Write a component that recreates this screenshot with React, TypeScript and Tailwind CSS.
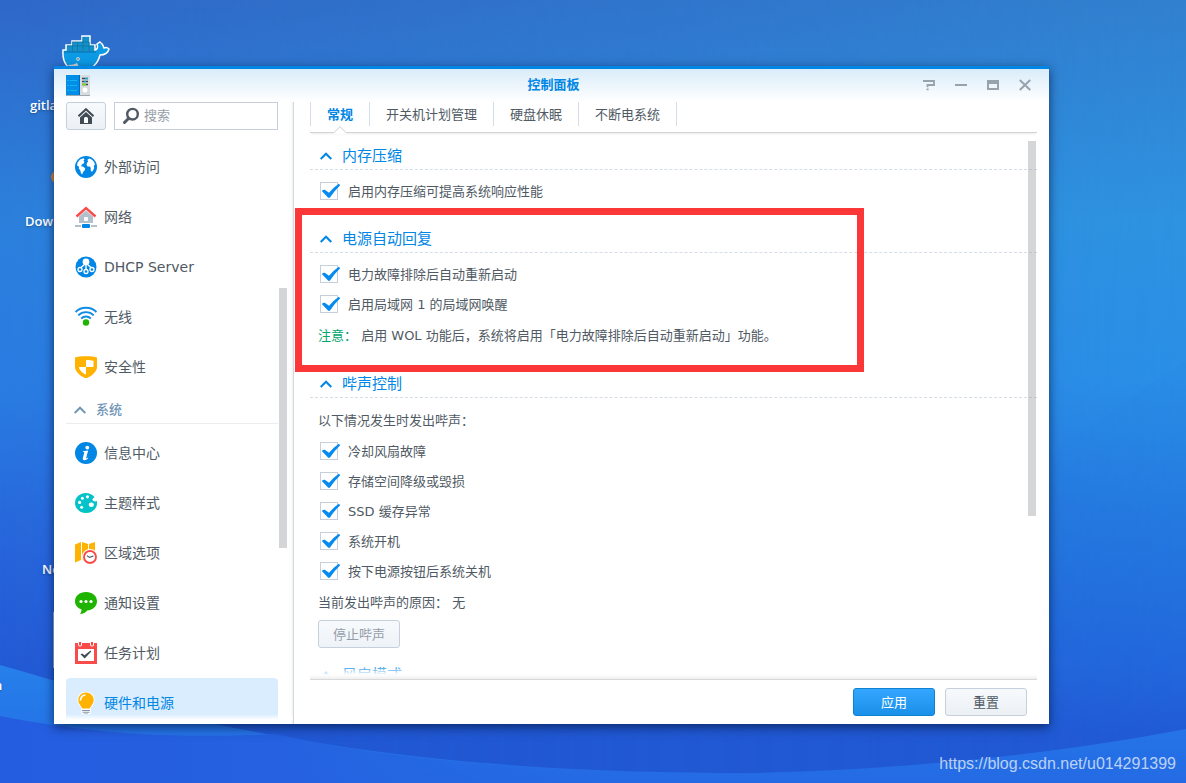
import React, { useState } from "react";

type IconProps = { children: React.ReactNode };

const Icon = ({ children }: IconProps) => (
  <svg viewBox="0 0 22 22" className="size-[22px] shrink-0" aria-hidden="true">
    {children}
  </svg>
);

const GlobeIcon = () => (
  <Icon>
    <circle cx="11" cy="11" r="11" fill="#0086e5" />
    <path
      d="M2.6 6.6 5 3.6 8.4 2.2l1.2 1L8.4 4.6l1 1.2L8.6 7.6 6.8 8.4l-.6 1.8 2.2.6 1.8 1.6-.6 2-1.6 1.6-.6 2.2-1.4-.6-.6-3.2-1.6-1.8.2-1.8L2 9.400z"
      fill="#fff"
    />
    <path
      d="M12.600 3.400l2-.8 2.800 1.400 1.800 2.200.8 2.600-1.200 1 .4 2.200-1.400 3-1.400.8-.8-1.800.2-2-1-1.400-2.200-.2-1-1.600.4-2 1.400-1.200-.8-.8z"
      fill="#fff"
    />
  </Icon>
);

const NetworkIcon = () => (
  <Icon>
    <path d="M4 10.500 11 4.500l7 6V17H4z" fill="#b3bfca" />
    <path d="M1.500 10.500 11 2l9.500 8.500" fill="none" stroke="#fa4b4b" strokeWidth="2.400" />
    <rect x="9" y="11" width="4" height="4" rx="1" fill="#fff" />
    <path d="M0 20h22" stroke="#b3bfca" strokeWidth="2" />
    <rect x="6" y="17" width="10" height="5" fill="#fff" />
    <rect x="7" y="18" width="8" height="4" rx="1" fill="#0086e5" />
  </Icon>
);

const DhcpIcon = () => (
  <Icon>
    <circle cx="11" cy="11" r="10.500" fill="#0086e5" />
    <circle cx="11" cy="5.800" r="3.400" fill="#fff" />
    <path d="M11 8v6M10 8l-4.500 4M12 8l4.500 4" stroke="#fff" strokeWidth="1.400" />
    <g fill="#0086e5" stroke="#fff" strokeWidth="1.300">
      <circle cx="5" cy="13.500" r="2" />
      <circle cx="11" cy="15.500" r="2" />
      <circle cx="17" cy="13.500" r="2" />
    </g>
  </Icon>
);

const WifiIcon = () => (
  <Icon>
    <g fill="none" stroke="#0f8ce6" strokeWidth="1.900">
      <path d="M.5 6C6 .4 16 .4 21.500 6" />
      <path d="M3.300 9.300c4.200-4.200 11.200-4.200 15.400 0" />
      <path d="M6.200 12.500c2.700-2.700 6.900-2.700 9.600 0" />
    </g>
    <circle cx="11" cy="16.500" r="3.200" fill="#1fb400" />
  </Icon>
);

const ShieldIcon = () => (
  <Icon>
    <path d="M0 1.500C4 -.3 18 -.3 22 1.500V11c0 5-5.500 9-11 11.500C5.500 20 0 16 0 11z" fill="#ffb200" />
    <path d="M11 4c3 0 5.500.2 7.500.7V11H11z" fill="#fff" />
    <path d="M4 11h7v7.500C7.500 17 4.300 14.500 4 11z" fill="#fff" />
  </Icon>
);

const InfoIcon = () => (
  <Icon>
    <circle cx="11" cy="11" r="11" fill="#0086e5" />
    <circle cx="12.300" cy="5.600" r="1.900" fill="#fff" />
    <path
      d="M8 9.200l5.200-.7-2 7.300c-.2.900.5.900 1.600-.2l.5.500c-1.300 1.700-2.600 2.300-3.900 2.200-1.500-.1-1.900-1-1.500-2.500l1.400-5.200c.1-.6-.3-.7-1.400-.7z"
      fill="#fff"
    />
  </Icon>
);

const PaletteIcon = () => (
  <Icon>
    <path
      d="M11 1C5 1 0 5.300 0 11s5 10 11 10c5.500 0 10.500-3.500 11-9V9c-1 .5-3 .6-4-.3-1-1-.4-2.300 1-2.900.6-.3.500-.9 0-1.300C17 2.200 14 1 11 1z"
      fill="#04c3c8"
    />
    <g fill="#fff">
      <circle cx="12.500" cy="4.800" r="1.600" />
      <circle cx="7.400" cy="6.200" r="1.500" />
      <circle cx="4.600" cy="10.400" r="1.600" />
      <circle cx="6.600" cy="15.200" r="1.500" />
      <ellipse cx="16.300" cy="12.700" rx="2.600" ry="2.200" />
    </g>
  </Icon>
);

const RegionIcon = () => (
  <Icon>
    <path d="M0 2.500 6 0v18l-6 2.500zM7 0l6 2v17l-6-1.500zM14 2l6-2v18l-6 1z" fill="#ffb200" />
    <circle cx="15" cy="15" r="8" fill="#fff" />
    <circle cx="15" cy="15" r="6" fill="#fff" stroke="#fa4b4b" strokeWidth="1.900" />
    <path d="M12 13.800l2.700 1.600 3.800-1.400" fill="none" stroke="#505a64" strokeWidth="1.200" />
  </Icon>
);

const ChatIcon = () => (
  <Icon>
    <path
      d="M11 0C4.500 0 0 4 0 9.300c0 4 2.500 6.800 6.500 8.200 0 1.700-.5 3-1.500 4.500 3 0 5.500-1.500 7.200-3.500C18 18 22 14.500 22 9.300 22 4 17.500 0 11 0z"
      fill="#1fb400"
    />
    <g fill="#fff">
      <circle cx="6" cy="9.500" r="1.600" />
      <circle cx="11" cy="9.500" r="1.600" />
      <circle cx="16" cy="9.500" r="1.600" />
    </g>
  </Icon>
);

const TaskIcon = () => (
  <Icon>
    <path d="M0 1h22v21H0z" fill="#fa4b4b" />
    <path d="M3 7h16v12H3z" fill="#fff" />
    <g fill="#fa4b4b" stroke="#fff">
      <rect x="3.500" y="-.5" width="3" height="4.500" rx="1" />
      <rect x="15.500" y="-.5" width="3" height="4.500" rx="1" />
    </g>
    <path d="M5.500 12.300l1.700-.8 2.300 1.800L15.500 8.500l.8 1L9.700 16.500z" fill="#414b55" />
  </Icon>
);

const BulbIcon = () => (
  <Icon>
    <path
      d="M11-.5C6-.5 2.500 3 2.500 8c0 3.500 2 5.500 3.700 8v5.200l2.300 1.300h5l2.300-1.300V16c1.700-2.500 3.700-4.500 3.700-8 0-5-3.500-8.500-8.500-8.500z"
      fill="#fff"
    />
    <path
      d="M11 .5C6.500.5 3.300 3.700 3.300 8c0 3.800 2.700 5.500 3.900 8.500h7.600c1.200-3 3.900-4.700 3.900-8.500C18.700 3.700 15.500.5 11 .5z"
      fill="#ffb200"
    />
    <path d="M5.500 8c.2-2.600 1.700-4.300 4.300-5" fill="none" stroke="#fff" strokeWidth="1.700" strokeLinecap="round" />
    <path d="M7 18.500h8M7.500 20.300h7M9 22h4" stroke="#8795a3" strokeWidth="1.100" />
  </Icon>
);

const Chevron = () => (
  <svg viewBox="0 0 12 8" className="h-2 w-3" fill="none" stroke="currentColor" strokeWidth="2" aria-hidden="true">
    <path d="M.7 7 6 1.700 11.300 7" />
  </svg>
);

const networkItems = [
  { label: "外部访问", icon: <GlobeIcon /> },
  { label: "网络", icon: <NetworkIcon /> },
  { label: "DHCP Server", icon: <DhcpIcon /> },
  { label: "无线", icon: <WifiIcon /> },
  { label: "安全性", icon: <ShieldIcon /> },
];

const systemItems = [
  { label: "信息中心", icon: <InfoIcon /> },
  { label: "主题样式", icon: <PaletteIcon /> },
  { label: "区域选项", icon: <RegionIcon /> },
  { label: "通知设置", icon: <ChatIcon /> },
  { label: "任务计划", icon: <TaskIcon /> },
  { label: "硬件和电源", icon: <BulbIcon /> },
];

const tabs = ["常规", "开关机计划管理", "硬盘休眠", "不断电系统"];

const beepEvents = ["冷却风扇故障", "存储空间降级或毁损", "SSD 缓存异常", "系统开机", "按下电源按钮后系统关机"];

const Wallpaper = () => (
  <svg
    viewBox="0 0 1186 783"
    preserveAspectRatio="none"
    className="absolute inset-0 size-full"
    aria-hidden="true"
  >
    <defs>
      <linearGradient id="skyLeft" x1="0" y1="0" x2="0" y2="1">
        <stop offset="0" stopColor="#2f68c8" />
        <stop offset=".28" stopColor="#2c80dc" />
        <stop offset=".5" stopColor="#2a7be2" />
        <stop offset=".72" stopColor="#2763da" />
        <stop offset=".9" stopColor="#2157d2" />
        <stop offset="1" stopColor="#2157d2" />
      </linearGradient>
      <linearGradient id="skyRight" x1="0" y1="0" x2="0" y2="1">
        <stop offset="0" stopColor="#3180cf" />
        <stop offset=".28" stopColor="#2e93e0" />
        <stop offset=".48" stopColor="#2a8fe6" />
        <stop offset=".66" stopColor="#257ae0" />
        <stop offset=".84" stopColor="#2268dc" />
        <stop offset=".94" stopColor="#2159d4" />
      </linearGradient>
      <linearGradient id="fade" x1="0" y1="0" x2="1" y2="0">
        <stop offset="0" stopColor="#000" />
        <stop offset="1" stopColor="#fff" />
      </linearGradient>
      <mask id="toRight">
        <rect width="1186" height="783" fill="url(#fade)" />
      </mask>
      <linearGradient id="wave" x1="0" y1="665" x2="0" y2="783" gradientUnits="userSpaceOnUse">
        <stop offset="0" stopColor="#2680ea" />
        <stop offset="1" stopColor="#246ae4" />
      </linearGradient>
      <linearGradient id="waveDark" x1="0" y1="0" x2="1" y2="0">
        <stop offset="0" stopColor="#255de0" />
        <stop offset=".4" stopColor="#2561e0" />
        <stop offset="1" stopColor="#246ae4" stopOpacity="0" />
      </linearGradient>
    </defs>
    <rect width="1186" height="783" fill="url(#skyLeft)" />
    <rect width="1186" height="783" fill="url(#skyRight)" mask="url(#toRight)" />
    <path d="M1186 360 1049 455V783h137z" fill="#1f6fe0" opacity=".06" />
    <path
      d="M0 665C70 685 140 706 215 724 400 762 560 773 750 773 900 770 1050 755 1186 729V783H0z"
      fill="url(#wave)"
    />
    <path d="M0 716C90 734 180 739 275 734 400 762 560 773 700 773V783H0z" fill="url(#waveDark)" />
  </svg>
);

const Whale = () => (
  <svg viewBox="0 0 48 36" className="h-9 w-12" aria-hidden="true">
    <path
      d="M1 15H4V10H10V6H20V1H28V10H33V15C36 14 36 12 35 9L38 7C41 9 41 11 42 13 44 12 46 13 47 14 46 18 42 20 38 20 36 28 30 36 18 36 6 36 0 28 1 15z"
      fill="#0d9be6"
      stroke="#fff"
      strokeWidth="1.500"
    />
    <path d="M5 10.500h27v6H5zM10.500 7h17v3.500h-17zM20.500 2h6.500v5h-6.500z" fill="#1590c8" />
    <path d="M10.500 7v9M15.500 7v9M21 2v14M27 7v9M5 11h27M10 7h17" stroke="#0b719e" strokeWidth=".6" />
    <path d="M2 17h32" stroke="#0d6da1" />
    <circle cx="16" cy="24" r="1.700" fill="#fff" />
    <circle cx="16" cy="24" r=".8" fill="#223" />
    <path d="M6 30c4 0 7-1 9-2l2 4 2 4H10z" fill="#d7dde1" />
  </svg>
);

const PanelIcon = () => (
  <svg viewBox="0 0 24 21" className="h-[21px] w-6" aria-hidden="true">
    <rect width="24" height="20" fill="#d9dcdf" />
    <path d="M0 0h13v20H0z" fill="#008ee6" />
    <path d="M13 0h1v20h-1z" fill="#006bc0" />
    <path d="M1 5.500h2M4 5.500h7M1 10.500h2M4 10.500h7M1 15.500h2M4 15.500h7" stroke="#13b4ee" />
    <path d="M16 3.500h6M16 6.500h6M16 9.500h6" stroke="#3c444c" strokeWidth="1.600" />
    <path d="M19 3.500h3M18 6.500h2" stroke="#13b4ee" strokeWidth="1.600" />
    <path d="M16 9.500h4" stroke="#7bd51c" strokeWidth="1.600" />
    <circle cx="19" cy="15" r="3" fill="#fff" stroke="#c2c8cd" strokeWidth=".5" />
    <path d="M0 20.500h24" stroke="#9fa9b2" />
  </svg>
);

const WindowControls = () => (
  <div className="flex text-[#98a2ad]">
    <button aria-label="帮助" className="flex h-8 w-8 items-center justify-center">
      <svg viewBox="0 0 12 12" className="size-3" fill="none" stroke="currentColor" strokeWidth="1.800">
        <path d="M0 2h11v4H4.500v2.200M3.600 10.300h2" />
      </svg>
    </button>
    <button aria-label="最小化" className="flex h-8 w-8 items-center justify-center">
      <svg viewBox="0 0 12 12" className="size-3" stroke="currentColor" strokeWidth="2">
        <path d="M0 6h12" />
      </svg>
    </button>
    <button aria-label="最大化" className="flex h-8 w-8 items-center justify-center">
      <svg viewBox="0 0 12 12" className="size-3" fill="none" stroke="currentColor">
        <path d="M1 2v8h10V2" strokeWidth="2" />
        <path d="M0 3h12" strokeWidth="4" />
      </svg>
    </button>
    <button aria-label="关闭" className="flex h-8 w-8 items-center justify-center">
      <svg viewBox="0 0 12 12" className="size-3" stroke="currentColor" strokeWidth="2">
        <path d="M.8 1 11.200 11M11.200 1 .8 11" />
      </svg>
    </button>
  </div>
);

interface NavItemProps {
  label: string;
  icon: React.ReactNode;
  active: boolean;
  onClick: () => void;
}

const NavItem = ({ label, icon, active, onClick }: NavItemProps) => (
  <li>
    <button
      onClick={onClick}
      className={`flex h-[50px] w-full items-center gap-[7px] rounded pl-[9px] text-left text-sm ${
        active ? "bg-[#d9edff] text-[#0086e5]" : "text-[#505a64]"
      }`}
    >
      {icon}
      <span>{label}</span>
    </button>
  </li>
);

const CheckRow = ({ label }: { label: string }) => {
  const [checked, setChecked] = useState(true);

  return (
    <label className="flex h-[30px] items-center gap-[10px] pl-[10px]">
      <span className="relative size-[18px]">
        <input
          type="checkbox"
          checked={checked}
          onChange={(e) => setChecked(e.target.checked)}
          className="block size-[18px] appearance-none border border-[#c6d0dc] bg-white"
        />
        {checked && (
          <svg viewBox="0 0 20 18" className="pointer-events-none absolute left-0 top-0 h-[18px] w-5 max-w-none">
            <path d="M1.800 9C3 7.600 4.500 7.400 5.500 8.200L9 10.800Q13.500 5.500 18.800 1.800L20.200 3.200Q14 9 10 15.500 9 16.300 8 15.500z" fill="#058bf0" />
          </svg>
        )}
      </span>
      <span className="pt-0.5">{label}</span>
    </label>
  );
};

const Section = ({ title, children }: { title: string; children?: React.ReactNode }) => (
  <section className="mb-[19px]">
    <h2 className="mb-1.5 h-7 border-b border-dashed border-[#d5dde6]">
      <button className="flex h-[27px] items-center gap-[10px] pl-[10px] text-[15px] leading-5 text-[#0086e5]">
        <Chevron />
        {title}
      </button>
    </h2>
    {children}
  </section>
);

const Note = ({ children }: { children: React.ReactNode }) => <p className="h-8 pt-px pl-2 leading-8">{children}</p>;

const Sidebar = () => {
  const [active, setActive] = useState("硬件和电源");

  return (
    <aside className="flex w-60 shrink-0 flex-col border-r border-[#d6d9dc] pl-3 shadow-[inset_-2px_0_2px_-1px_#eceef0]">
      <div className="flex gap-2 pr-[15px]">
        <button
          aria-label="主页"
          className="flex h-7 w-10 items-center justify-center rounded-[3px] border border-[#c6d0dc] bg-linear-to-b from-[#f7fafd] to-[#ebf0f5]"
        >
          <svg viewBox="0 0 16 16" className="size-4" aria-hidden="true">
            <path d="M.5 8.200 8 1.200l7.500 7" fill="none" stroke="#414b55" strokeWidth="2" />
            <path d="M2 9.500 8 4l6 5.500V16H2z" fill="#414b55" />
            <path d="M6 15v-4.500c0-1 .8-1.500 2-1.500s2 .5 2 1.500V15z" fill="#fff" />
          </svg>
        </button>
        <label className="flex h-7 min-w-0 flex-1 items-center gap-1 border border-[#c6d0dc] bg-white pl-[7px]">
          <svg viewBox="0 0 18 18" className="size-[18px] shrink-0" fill="none" stroke="#505a64" aria-hidden="true">
            <circle cx="10.500" cy="7.200" r="5.300" strokeWidth="2.400" />
            <path d="M6.500 11.500 2.500 15.500" strokeWidth="3" strokeLinecap="round" />
          </svg>
          <input
            type="search"
            aria-label="搜索"
            placeholder="搜索"
            className="w-full min-w-0 text-[13px] leading-5 outline-none placeholder:text-[#969ea8]"
          />
        </label>
      </div>
      <nav className="relative mt-3 mb-1 min-h-0 flex-1 overflow-hidden pr-[15px]">
        <ul>
          {networkItems.map((item) => (
            <NavItem
              key={item.label}
              {...item}
              active={active === item.label}
              onClick={() => setActive(item.label)}
            />
          ))}
        </ul>
        <h3 className="mb-1 flex h-8 items-center gap-[10px] border-b border-[#ebecee] pt-1 pl-2 text-[13px] font-medium text-[#7196b8]">
          <Chevron />
          系统
        </h3>
        <ul>
          {systemItems.map((item) => (
            <NavItem
              key={item.label}
              {...item}
              active={active === item.label}
              onClick={() => setActive(item.label)}
            />
          ))}
        </ul>
        <div className="pointer-events-none absolute inset-x-0 bottom-0 h-1.5 bg-linear-to-b from-transparent to-white" />
        <div className="absolute right-1.5 top-[146px] h-[260px] w-2 bg-[#d4d5d7]" />
      </nav>
    </aside>
  );
};

const Tabs = () => {
  const [active, setActive] = useState("常规");

  return (
    <div className="border-b border-[#d3d3d3] pb-1.5 shadow-[0_2px_2px_-1px_#ececec]">
      <div role="tablist" className="flex h-6 border-l border-[#d5dde6]">
        {tabs.map((tab) => (
          <button
            key={tab}
            role="tab"
            aria-selected={active === tab}
            onClick={() => setActive(tab)}
            className={`relative border-r border-[#d5dde6] px-4 pt-0.5 ${
              active === tab ? "font-bold text-[#0086e5]" : "text-[#505a64]"
            }`}
          >
            {tab}
            {active === tab && (
              <svg viewBox="0 0 14 8" className="absolute left-1/2 top-6 h-2 w-3.5 -translate-x-1/2" aria-hidden="true">
                <path d="M0 6.500 7 .5l7 6V8H0z" fill="#fff" />
                <path d="M0 6.500h1L7 .7l6 5.800h1" fill="none" stroke="#cfcfcf" />
              </svg>
            )}
          </button>
        ))}
      </div>
    </div>
  );
};

const ControlPanel = () => (
  <div className="relative flex min-w-0 flex-1 flex-col border-t-[3px] border-[#0086e5] bg-white shadow-[0_3px_10px_rgba(0,20,60,0.7)]">
    <header className="flex h-[33px] items-center bg-linear-to-b from-[#d9ecf9] to-white pb-px">
      <div className="flex-1 pl-3">
        <PanelIcon />
      </div>
      <h1 className="text-[13px] leading-5 font-bold text-[#0086e5]">控制面板</h1>
      <div className="flex flex-1 justify-end pr-2">
        <WindowControls />
      </div>
    </header>
    <div className="flex min-h-0 flex-1">
      <Sidebar />
      <main className="flex min-w-0 flex-1 flex-col pl-4 pr-3">
        <Tabs />
        <div className="relative min-h-0 flex-1 overflow-hidden pt-[9px]">
          <Section title="内存压缩">
            <CheckRow label="启用内存压缩可提高系统响应性能" />
          </Section>
          <Section title="电源自动回复">
            <CheckRow label="电力故障排除后自动重新启动" />
            <CheckRow label="启用局域网 1 的局域网唤醒" />
            <Note>
              <span className="text-[#00a56c]">注意：</span> 启用 WOL 功能后，系统将启用「电力故障排除后自动重新启动」功能。
            </Note>
          </Section>
          <Section title="哔声控制">
            <Note>以下情况发生时发出哔声：</Note>
            {beepEvents.map((event) => (
              <CheckRow key={event} label={event} />
            ))}
            <Note>当前发出哔声的原因： 无</Note>
            <div className="h-6 pt-0.5 pl-2">
              <button
                disabled
                className="h-7 w-[82px] rounded-[3px] border border-[#c6d0dc] bg-linear-to-b from-[#f7fafd] to-[#eef3f8] pt-0.5 text-[#969ea8]"
              >
                停止哔声
              </button>
            </div>
          </Section>
          <Section title="风扇模式" />
          {/* content fades out above the footer line */}
          <div className="pointer-events-none absolute inset-x-0 bottom-0 h-3 bg-linear-to-b from-white/20 via-white via-65% to-[#efefef]" />
          <div className="absolute right-px top-2 h-[375px] w-2 bg-[#a0a4a8]/45" />
        </div>
        <footer className="flex justify-end gap-[10px] border-t border-[#d9d9d9] py-2 pr-[10px]">
          <button className="h-7 w-[82px] rounded-[3px] border border-[#0f80d2] bg-linear-to-b from-[#33a6ff] to-[#1a90e8] pt-0.5 text-white">
            应用
          </button>
          <button className="h-7 w-[82px] rounded-[3px] border border-[#c6d0dc] bg-linear-to-b from-[#f7fafd] to-[#ebf0f5] pt-0.5">
            重置
          </button>
        </footer>
      </main>
    </div>
    {/* highlight around the power recovery section */}
    <div className="pointer-events-none absolute left-[241px] top-[139px] h-[164px] w-[569px] border-[7px] border-[#fc3737]" />
  </div>
);

const App = () => {
  return (
    <div className="relative flex h-screen overflow-hidden pt-[66px] pr-[137px] pb-[59px] pl-[54px] font-['DejaVu_Sans','Noto_Sans_CJK_SC',sans-serif] text-[13px] text-[#505a64]">
      <Wallpaper />
      <div className="absolute left-[62px] top-[35px]">
        <Whale />
      </div>
      <div className="absolute left-[53px] top-[612px] h-14 w-14 bg-[#a9b9dc]" />
      <div className="absolute left-[51px] top-[171px] size-3 rounded-full bg-[#d98a2b]" />
      <div className="font-['Open_Sans',sans-serif] font-semibold leading-5 text-white text-shadow-md">
        <span className="absolute left-[30px] top-[95px]">gitlab</span>
        <span className="absolute left-[25px] top-[211px]">Dow</span>
        <span className="absolute left-[42px] top-[559px]">No</span>
        <span className="absolute -left-[6px] top-[675px]">n</span>
      </div>
      <ControlPanel />
      <a
        href="https://blog.csdn.net/u014291399"
        className="absolute right-[10px] bottom-[7px] font-['Liberation_Sans',sans-serif] text-base text-white/70"
      >
        https://blog.csdn.net/u014291399
      </a>
    </div>
  );
};

export default App;
